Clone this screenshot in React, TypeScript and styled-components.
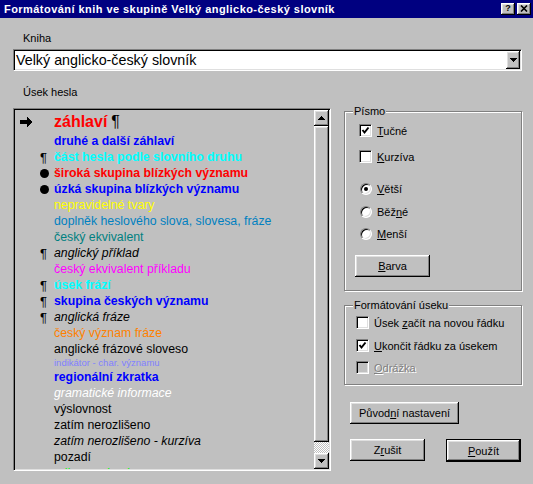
import React from "react";
import styled, { createGlobalStyle } from "styled-components";

const GlobalStyle = createGlobalStyle`
  html, body {
    margin: 0;
    padding: 0;
    background: #c0c0c0;
  }
  body {
    font-family: "Liberation Sans", Arial, sans-serif;
    font-size: 11px;
    color: #000;
  }
`;

const raised = `
  background: #c0c0c0;
  box-shadow: inset -1px -1px 0 #000, inset 1px 1px 0 #fff,
    inset -2px -2px 0 #808080, inset 2px 2px 0 #dfdfdf;
`;

const sunken = `
  border: 1px solid;
  border-color: #808080 #fff #fff #808080;
  box-shadow: inset 1px 1px 0 #000, inset -1px -1px 0 #dfdfdf;
`;

const Window = styled.div`
  width: 533px;
  height: 484px;
  background: #c0c0c0;
  overflow: hidden;
  display: flex;
  flex-direction: column;
`;

const TitleBar = styled.div`
  height: 18px;
  flex: none;
  background: #000080;
  display: flex;
  align-items: center;
  padding: 0 2px 0 4px;
`;

const TitleText = styled.div`
  flex: 1;
  color: #fff;
  font-weight: bold;
  font-size: 11px;
  letter-spacing: 0.45px;
  white-space: nowrap;
`;

const CaptionButton = styled.div<{ $gap?: number }>`
  ${raised}
  width: 14px;
  height: 12px;
  box-sizing: border-box;
  margin-left: ${(p) => p.$gap ?? 0}px;
  display: flex;
  align-items: center;
  justify-content: center;
  font-weight: bold;
  font-size: 9px;
  line-height: 9px;
  padding-bottom: 1px;
`;

const Content = styled.div`
  padding: 14px 11px 0 13px;
  display: flex;
  flex-direction: column;
`;

const FieldLabel = styled.div<{ $top?: number; $bottom: number }>`
  margin: ${(p) => p.$top ?? 0}px 0 ${(p) => p.$bottom}px 10px;
  height: 13px;
  line-height: 13px;
`;

const Combo = styled.div`
  ${sunken}
  height: 22px;
  box-sizing: border-box;
  background: #fff;
  display: flex;
  align-items: stretch;
  padding: 1px;
`;

const ComboText = styled.div`
  flex: 1;
  font-size: 14.3px;
  line-height: 18px;
  padding-left: 1px;
  white-space: nowrap;
`;

const ArrowButton = styled.div<{ $w: number; $h: number }>`
  ${raised}
  width: ${(p) => p.$w}px;
  height: ${(p) => p.$h}px;
  flex: none;
  box-sizing: border-box;
  display: flex;
  align-items: center;
  justify-content: center;
`;

const Lower = styled.div`
  display: grid;
  grid-template-columns: 318px 178px;
  column-gap: 13px;
  margin-top: 13px;
`;

const LeftColumn = styled.div`
  display: flex;
  flex-direction: column;
`;

const ListBox = styled.div`
  ${sunken}
  height: 363px;
  box-sizing: border-box;
  padding: 1px;
  display: flex;
`;

const ListItems = styled.div`
  flex: 1;
  overflow: hidden;
`;

const Row = styled.div<{ $h: number }>`
  height: ${(p) => p.$h}px;
  display: grid;
  grid-template-columns: 20px 15px auto;
  align-items: center;
  padding-left: 4px;
  white-space: nowrap;
`;

const Marker = styled.span`
  font-size: 13px;
  line-height: 13px;
  display: flex;
  align-items: center;
  padding-left: 1px;
`;

const Bullet = styled.span`
  width: 9px;
  height: 9px;
  border-radius: 50%;
  background: #000;
`;

const ItemText = styled.span<{
  $color: string;
  $bold?: boolean;
  $italic?: boolean;
  $size: number;
}>`
  color: ${(p) => p.$color};
  font-weight: ${(p) => (p.$bold ? "bold" : "normal")};
  font-style: ${(p) => (p.$italic ? "italic" : "normal")};
  font-size: ${(p) => p.$size}px;
  line-height: 1;
`;

const Pilcrow = styled.span`
  color: #000;
  font-weight: normal;
  margin-left: 4px;
`;

const ScrollBar = styled.div`
  width: 15px;
  flex: none;
  display: flex;
  flex-direction: column;
`;

const Thumb = styled.div`
  ${raised}
  height: 316px;
`;

const Track = styled.div`
  flex: 1;
  background: repeating-conic-gradient(#fff 0 25%, #c0c0c0 0 50%) 0 0 / 2px 2px;
`;

const RightColumn = styled.div`
  display: flex;
  flex-direction: column;
  padding-top: 27px;
`;

const Group = styled.div<{ $h: number; $top?: number; $pad: number }>`
  position: relative;
  height: ${(p) => p.$h}px;
  margin-top: ${(p) => p.$top ?? 0}px;
  box-sizing: border-box;
  border: 1px solid #808080;
  box-shadow: 1px 1px 0 #fff, inset 1px 1px 0 #fff;
  padding-top: ${(p) => p.$pad}px;
  display: flex;
  flex-direction: column;
  align-items: flex-start;
`;

const Legend = styled.div`
  position: absolute;
  top: -7px;
  left: 8px;
  padding: 0 1px;
  background: #c0c0c0;
  line-height: 13px;
`;

const Option = styled.div<{ $top?: number; $left: number; $disabled?: boolean }>`
  height: 13px;
  margin-top: ${(p) => p.$top ?? 0}px;
  margin-left: ${(p) => p.$left}px;
  display: flex;
  align-items: center;
  gap: 5px;
  white-space: nowrap;
  color: ${(p) => (p.$disabled ? "#808080" : "#000")};
  text-shadow: ${(p) => (p.$disabled ? "1px 1px 0 #fff" : "none")};
`;

const CheckBox = styled.div<{ $disabled?: boolean }>`
  ${sunken}
  width: 13px;
  height: 13px;
  box-sizing: border-box;
  flex: none;
  background: ${(p) => (p.$disabled ? "#c0c0c0" : "#fff")};
  display: flex;
  align-items: center;
  justify-content: center;
`;

const RadioCircle = styled.div`
  ${sunken}
  width: 12px;
  height: 12px;
  border-radius: 50%;
  box-sizing: border-box;
  flex: none;
  background: #fff;
  margin-left: 1px;
  display: flex;
  align-items: center;
  justify-content: center;
`;

const RadioDot = styled.div`
  width: 4px;
  height: 4px;
  border-radius: 50%;
  background: #000;
`;

const Key = styled.u`
  text-decoration-thickness: 1px;
  text-underline-offset: 1px;
`;

const Button = styled.button<{
  $w: number;
  $h?: number;
  $top?: number;
  $left?: number;
  $default?: boolean;
}>`
  ${raised}
  width: ${(p) => p.$w}px;
  height: ${(p) => p.$h ?? 22}px;
  margin: ${(p) => p.$top ?? 0}px 0 0 ${(p) => p.$left ?? 0}px;
  box-sizing: border-box;
  border: ${(p) => (p.$default ? "1px solid #000" : "none")};
  padding: 0;
  font-family: inherit;
  font-size: 11px;
  color: #000;
  display: flex;
  align-items: center;
  justify-content: center;
  flex: none;
`;

const ButtonRow = styled.div`
  display: flex;
  align-items: flex-start;
  gap: 21px;
  margin: 15px 0 0 6px;
`;

type Item = {
  text: string;
  color?: string;
  bold?: boolean;
  italic?: boolean;
  size?: number;
  h?: number;
  mark?: "para" | "bullet";
  arrow?: boolean;
  pilcrowAfter?: boolean;
};

const items: Item[] = [
  { text: "záhlaví", color: "#ff0000", bold: true, size: 16, h: 23, arrow: true, pilcrowAfter: true },
  { text: "druhé a další záhlaví", color: "#0000ff", bold: true },
  { text: "část hesla podle slovního druhu", color: "#00ffff", bold: true, mark: "para" },
  { text: "široká skupina blízkých významu", color: "#ff0000", bold: true, mark: "bullet" },
  { text: "úzká skupina blízkých významu", color: "#0000ff", bold: true, mark: "bullet" },
  { text: "nepravidelné tvary", color: "#ffff00" },
  { text: "doplněk heslového slova, slovesa, fráze", color: "#0080c0" },
  { text: "český ekvivalent", color: "#008080" },
  { text: "anglický příklad", italic: true, mark: "para" },
  { text: "český ekvivalent příkladu", color: "#ff00ff" },
  { text: "úsek frází", color: "#00ffff", bold: true, mark: "para" },
  { text: "skupina českých významu", color: "#0000ff", bold: true, mark: "para" },
  { text: "anglická fráze", italic: true, mark: "para" },
  { text: "český význam fráze", color: "#ff8000" },
  { text: "anglické frázové sloveso" },
  { text: "indikátor - char. významu", color: "#8080ff", size: 9.5, h: 12 },
  { text: "regionální zkratka", color: "#0000ff", bold: true },
  { text: "gramatické informace", color: "#ffffff", italic: true },
  { text: "výslovnost" },
  { text: "zatím nerozlišeno" },
  { text: "zatím nerozlišeno - kurzíva", italic: true },
  { text: "pozadí" },
  { text: "odkaz na heslo", color: "#00ff00" },
];

function RightArrow() {
  return (
    <svg width="13" height="10" viewBox="0 0 13 10" shapeRendering="crispEdges">
      <polygon points="0,3 7,3 7,0 13,5 7,10 7,7 0,7" fill="#000" />
    </svg>
  );
}

function Triangle({ up }: { up?: boolean }) {
  return (
    <svg width="7" height="4" viewBox="0 0 7 4" shapeRendering="crispEdges">
      <polygon points={up ? "3.5,0 7,4 0,4" : "0,0 7,0 3.5,4"} fill="#000" />
    </svg>
  );
}

function CheckMark({ color = "#000" }: { color?: string }) {
  return (
    <svg width="9" height="9" viewBox="0 0 9 9">
      <polyline points="1.5,4 3.5,6.5 7.5,1.5" fill="none" stroke={color} strokeWidth="2" />
    </svg>
  );
}

function CloseGlyph() {
  return (
    <svg width="8" height="7" viewBox="0 0 8 7">
      <path d="M1 0.5 L7 6.5 M7 0.5 L1 6.5" stroke="#000" strokeWidth="1.6" />
    </svg>
  );
}

function Check({ checked, disabled, children }: { checked?: boolean; disabled?: boolean; children: React.ReactNode }) {
  return (
    <>
      <CheckBox $disabled={disabled}>{checked && <CheckMark />}</CheckBox>
      <span>{children}</span>
    </>
  );
}

function Radio({ selected, children }: { selected?: boolean; children: React.ReactNode }) {
  return (
    <>
      <RadioCircle>{selected && <RadioDot />}</RadioCircle>
      <span>{children}</span>
    </>
  );
}

export default function App() {
  return (
    <>
      <GlobalStyle />
      <Window>
        <TitleBar>
          <TitleText>Formátování knih ve skupině Velký anglicko-český slovník</TitleText>
          <CaptionButton>?</CaptionButton>
          <CaptionButton $gap={2}>
            <CloseGlyph />
          </CaptionButton>
        </TitleBar>

        <Content>
          <FieldLabel $bottom={4}>Kniha</FieldLabel>
          <Combo>
            <ComboText>Velký anglicko-český slovník</ComboText>
            <ArrowButton $w={14} $h={18}>
              <Triangle />
            </ArrowButton>
          </Combo>

          <Lower>
            <LeftColumn>
              <FieldLabel $top={2} $bottom={9}>
                Úsek hesla
              </FieldLabel>
              <ListBox>
                <ListItems>
                  {items.map((it, i) => (
                    <Row key={i} $h={it.h ?? 16}>
                      <Marker>{it.arrow && <RightArrow />}</Marker>
                      <Marker>
                        {it.mark === "para" && "¶"}
                        {it.mark === "bullet" && <Bullet />}
                      </Marker>
                      <ItemText
                        $color={it.color ?? "#000"}
                        $bold={it.bold}
                        $italic={it.italic}
                        $size={it.size ?? 12.3}
                      >
                        {it.text}
                        {it.pilcrowAfter && <Pilcrow>¶</Pilcrow>}
                      </ItemText>
                    </Row>
                  ))}
                </ListItems>
                <ScrollBar>
                  <ArrowButton $w={15} $h={16}>
                    <Triangle up />
                  </ArrowButton>
                  <Thumb />
                  <Track />
                  <ArrowButton $w={15} $h={16}>
                    <Triangle />
                  </ArrowButton>
                </ScrollBar>
              </ListBox>
            </LeftColumn>

            <RightColumn>
              <Group $h={180} $pad={12}>
                <Legend>Písmo</Legend>
                <Option $left={14}>
                  <Check checked>
                    <Key>T</Key>učné
                  </Check>
                </Option>
                <Option $top={13} $left={14}>
                  <Check>
                    <Key>K</Key>urzíva
                  </Check>
                </Option>
                <Option $top={19} $left={14}>
                  <Radio selected>
                    <Key>V</Key>ětší
                  </Radio>
                </Option>
                <Option $top={10} $left={14}>
                  <Radio>
                    Běž<Key>n</Key>é
                  </Radio>
                </Option>
                <Option $top={9} $left={14}>
                  <Radio>
                    <Key>M</Key>enší
                  </Radio>
                </Option>
                <Button $w={75} $top={15} $left={10}>
                  <Key>B</Key>arva
                </Button>
              </Group>

              <Group $h={80} $top={14} $pad={10}>
                <Legend>Formátování úseku</Legend>
                <Option $left={11}>
                  <Check>
                    Úsek <Key>z</Key>ačít na novou řádku
                  </Check>
                </Option>
                <Option $top={10} $left={11}>
                  <Check checked>
                    <Key>U</Key>končit řádku za úsekem
                  </Check>
                </Option>
                <Option $top={9} $left={11} $disabled>
                  <Check disabled>
                    <Key>O</Key>drážka
                  </Check>
                </Option>
              </Group>

              <Button $w={109} $top={17} $left={6}>
                Původ<Key>n</Key>í nastavení
              </Button>

              <ButtonRow>
                <Button $w={75}>
                  Z<Key>r</Key>ušit
                </Button>
                <Button $w={75} $h={23} $default>
                  <Key>P</Key>oužít
                </Button>
              </ButtonRow>
            </RightColumn>
          </Lower>
        </Content>
      </Window>
    </>
  );
}
